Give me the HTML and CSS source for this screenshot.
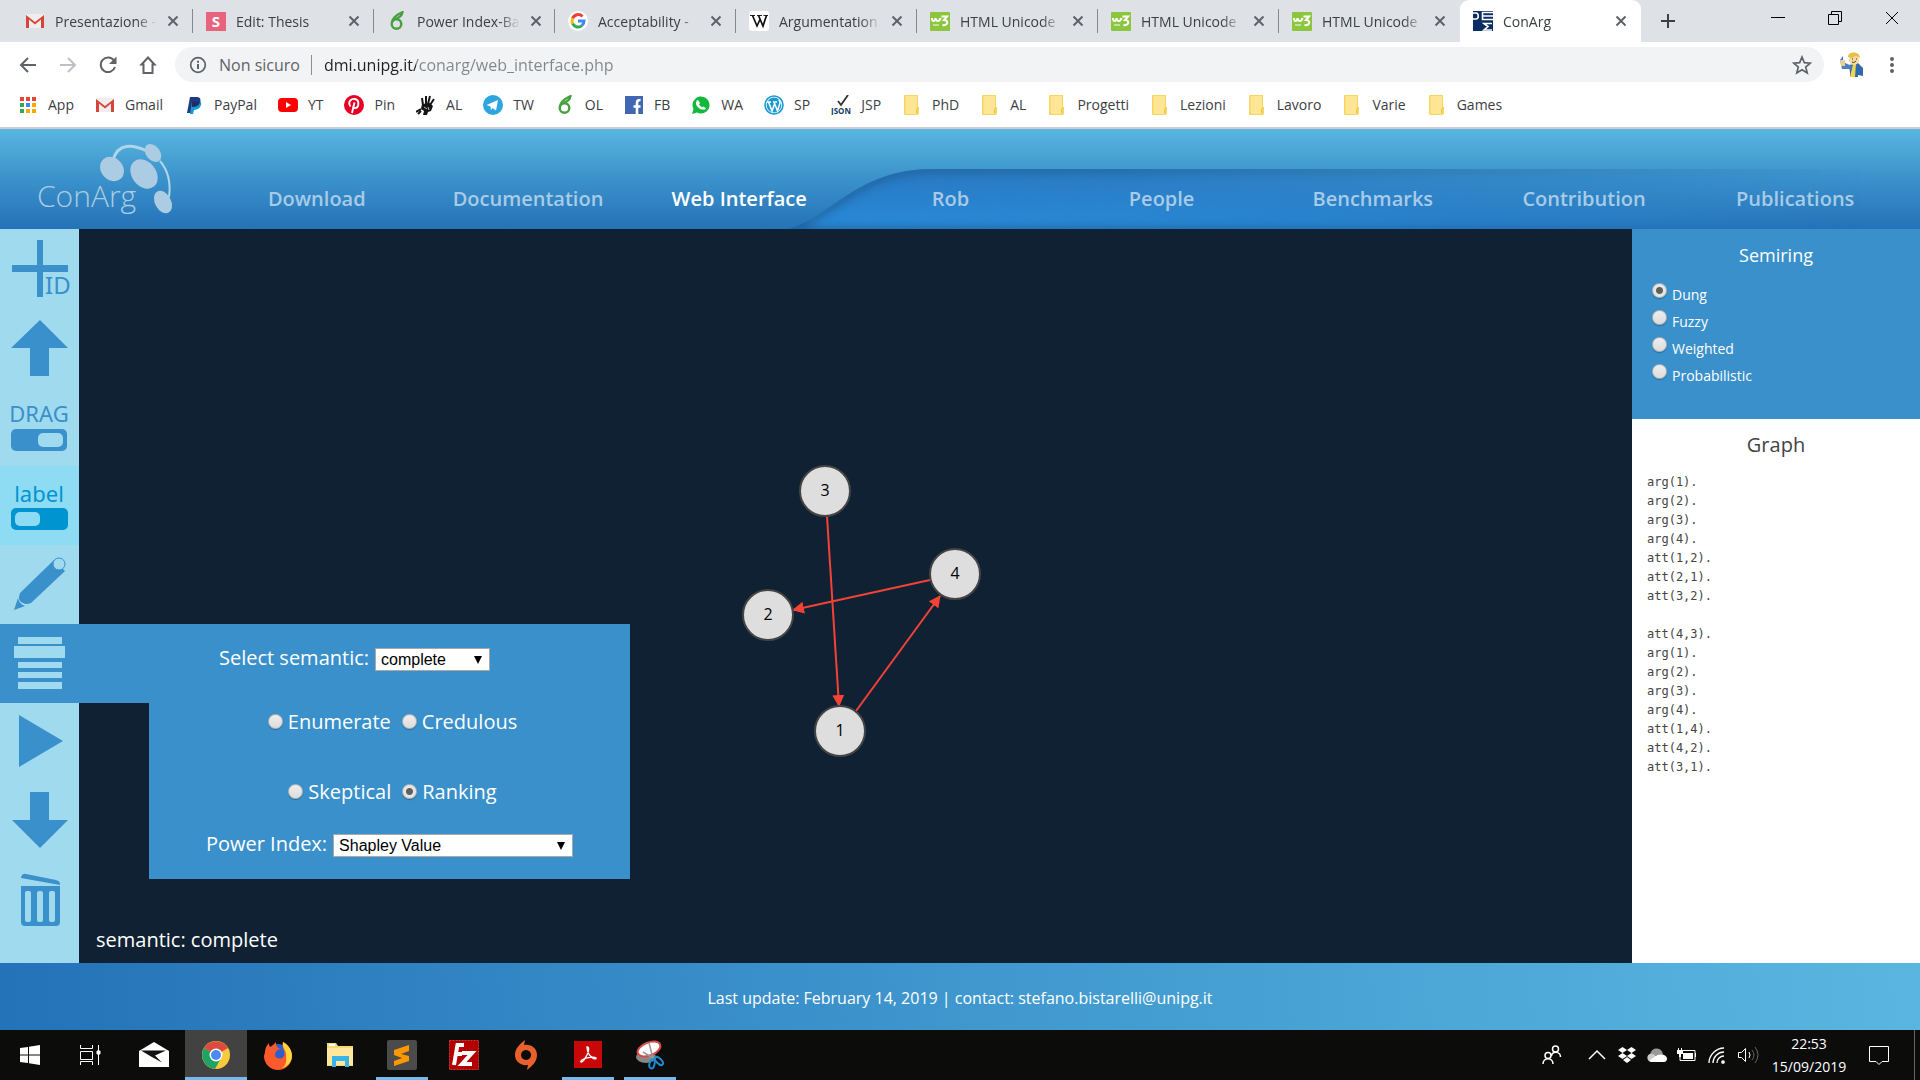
FILE: index.html
```html
<!DOCTYPE html>
<html lang="en">
<head>
  <meta charset="utf-8">
  <title>ConArg</title>
  <link rel="stylesheet" href="styles.css">
</head>
<body>

  <!-- shared icons -->
  <svg class="defs" width="0" height="0" aria-hidden="true">
    <symbol id="i-close" viewBox="0 0 12 12"><path d="M1.5 1.5l9 9M10.5 1.5l-9 9" stroke="#5f6368" stroke-width="2" fill="none"/></symbol>
    <symbol id="i-gmail" viewBox="0 0 20 20"><path d="M1 3h18v14H1z" fill="#f0eded"/><path d="M1 17V4l9 7 9-7v13h-3V8.500l-6 5-6-5V17z" fill="#d6453a"/></symbol>
    <symbol id="i-leaf" viewBox="0 0 20 20"><circle cx="9.500" cy="13" r="4.800" fill="none" stroke="#47a141" stroke-width="2.400"/><path d="M5 12C5 7 9 4 15.500 1c-.5 4-4 6-7 7" fill="none" stroke="#47a141" stroke-width="2.200"/></symbol>
    <symbol id="i-w3" viewBox="0 0 20 20"><rect y="1" width="20" height="19" rx="1" fill="#8cc63f"/><path d="M2 7c0 4 3 4 3.500 0 .5 4 4 4 5 0M11.500 5.500H17l-3 3.500c5 0 4 6-1.500 5" fill="none" stroke="#fff" stroke-width="2"/><path d="M3 14h6" stroke="#d5ecb4" stroke-width="1.500"/></symbol>
    <symbol id="i-folder" viewBox="0 0 20 20"><path d="M3 0h13v12h1v6a2 2 0 0 1-2 2H3a1 1 0 0 1-1-1V1a1 1 0 0 1 1-1z" fill="#f7d65f"/><path d="M3.500 1H15v12l-1 2v4H3.500z" fill="#ffe695"/><path d="M14.500 18v-4q1-2 2 0" stroke="#f0c64a" fill="none"/></symbol>
  </svg>

  <header class="browser">
    <div class="tab-strip">
      <div class="tab">
        <svg class="favicon"><use href="#i-gmail"/></svg>
        <span class="tab-title">Presentazione -</span>
        <button class="tab-close" aria-label="Close tab"><svg><use href="#i-close"/></svg></button>
      </div>
      <div class="tab">
        <svg class="favicon" viewBox="0 0 20 20"><path d="M0 1h20v19H0z" fill="#e9637d"/><text x="10" y="16" text-anchor="middle" class="favicon-s">S</text></svg>
        <span class="tab-title">Edit: Thesis</span>
        <button class="tab-close" aria-label="Close tab"><svg><use href="#i-close"/></svg></button>
      </div>
      <div class="tab">
        <svg class="favicon"><use href="#i-leaf"/></svg>
        <span class="tab-title">Power Index-Ba</span>
        <button class="tab-close" aria-label="Close tab"><svg><use href="#i-close"/></svg></button>
      </div>
      <div class="tab">
        <svg class="favicon" viewBox="0 0 20 20"><circle cx="10" cy="10" r="10" fill="#fff"/><g fill="none" stroke-width="3"><path d="M14.500 5.500A6 6 0 0 0 4.600 7.300" stroke="#ea4335"/><path d="M4.600 7.300a6 6 0 0 0 0 5.400" stroke="#fbbc05"/><path d="M4.600 12.700a6 6 0 0 0 9.400 1.800" stroke="#34a853"/><path d="M14 14.500a6 6 0 0 0 2-4.500h-6" stroke="#4285f4"/></g></svg>
        <span class="tab-title">Acceptability -</span>
        <button class="tab-close" aria-label="Close tab"><svg><use href="#i-close"/></svg></button>
      </div>
      <div class="tab">
        <svg class="favicon" viewBox="0 0 20 20"><rect width="20" height="20" rx="3" fill="#fff"/><path d="M1 4.500h5M8 4.500h5M14.500 4.500H19" stroke="#222"/><path d="M3.500 4.500L8 15l3-6.500M9.500 4.500L14 15l3.500-10.500" fill="none" stroke="#111" stroke-width="1.700"/></svg>
        <span class="tab-title">Argumentation</span>
        <button class="tab-close" aria-label="Close tab"><svg><use href="#i-close"/></svg></button>
      </div>
      <div class="tab">
        <svg class="favicon"><use href="#i-w3"/></svg>
        <span class="tab-title">HTML Unicode</span>
        <button class="tab-close" aria-label="Close tab"><svg><use href="#i-close"/></svg></button>
      </div>
      <div class="tab">
        <svg class="favicon"><use href="#i-w3"/></svg>
        <span class="tab-title">HTML Unicode</span>
        <button class="tab-close" aria-label="Close tab"><svg><use href="#i-close"/></svg></button>
      </div>
      <div class="tab tab-last">
        <svg class="favicon"><use href="#i-w3"/></svg>
        <span class="tab-title">HTML Unicode</span>
        <button class="tab-close" aria-label="Close tab"><svg><use href="#i-close"/></svg></button>
      </div>
      <div class="tab active">
        <svg class="favicon" viewBox="0 0 20 20"><path d="M0 0h20v20H0z" fill="#0b2d63"/><path d="M0 2h3c3 0 3 6 0 6H0M20 1.500H9.500v7H20M9.500 5H20M19 12.500h-8l4 3-4 3.500h8" fill="none" stroke="#fff" stroke-width="1.600"/></svg>
        <span class="tab-title">ConArg</span>
        <button class="tab-close" aria-label="Close tab"><svg><use href="#i-close"/></svg></button>
      </div>
      <button class="new-tab" aria-label="New tab"><svg width="16" height="16"><path d="M8 1v14M1 8h14" stroke="#3c4043" stroke-width="2"/></svg></button>
      <div class="window-buttons">
        <button aria-label="Minimize"><svg width="14" height="14"><path d="M0 6.500h14" stroke="#000"/></svg></button>
        <button aria-label="Restore"><svg width="14" height="14"><path d="M.5 3.500h10v10H.5zM3.500 3V.500h10v10H11" fill="none" stroke="#000"/></svg></button>
        <button aria-label="Close"><svg width="14" height="14"><path d="M1 1l12 12M13 1L1 13" stroke="#000"/></svg></button>
      </div>
    </div>

    <div class="toolbar">
      <button class="tool" aria-label="Back"><svg width="20" height="20"><path d="M18 10H3M10 3l-7 7 7 7" fill="none" stroke="#5f6368" stroke-width="2"/></svg></button>
      <button class="tool" aria-label="Forward"><svg width="20" height="20"><path d="M2 10h15M10 3l7 7-7 7" fill="none" stroke="#bdc1c6" stroke-width="2"/></svg></button>
      <button class="tool" aria-label="Reload"><svg width="20" height="20"><path d="M16 5.500A7.300 7.300 0 1 0 17 12" fill="none" stroke="#5f6368" stroke-width="2"/><path d="M18.500 1.500v7.500H11z" fill="#5f6368"/></svg></button>
      <button class="tool" aria-label="Home"><svg width="20" height="20"><path d="M10 2.500l6.500 7h-2V18h-9V9.500h-2z" fill="none" stroke="#5f6368" stroke-width="2"/></svg></button>
      <div class="omnibox">
        <svg width="18" height="18"><circle cx="9" cy="9" r="7.300" fill="none" stroke="#5f6368" stroke-width="1.700"/><path d="M9 8v5M9 4.800v2" stroke="#5f6368" stroke-width="2"/></svg>
        <span class="not-secure">Non sicuro</span>
        <input class="url" type="text" aria-label="Address" value="dmi.unipg.it/conarg/web_interface.php">
        <button class="star" aria-label="Bookmark"><svg width="20" height="20"><path d="M10 2l2.300 5.600 6 .5-4.600 3.900 1.500 5.900L10 14.700l-5.200 3.200L6.300 12 1.700 8.100l6-.5z" fill="none" stroke="#5f6368" stroke-width="1.700"/></svg></button>
      </div>
      <button class="tool avatar" aria-label="Profile"><svg width="26" height="26"><path d="M10 13l9-2 5 5v8l-5-1v2h-8v-4z" fill="#2f68ae"/><path d="M1 8l3-4v6l9 4-1 3H3z" fill="#4c80bb"/><path d="M1 8h5v6H2z" fill="#e7cf9d"/><path d="M14 12h3l-1 13h-5z" fill="#f1d44d"/><circle cx="15" cy="8" r="5" fill="#f2d9a0"/><path d="M9 5c0-6 12-6 12 1l-4-2-5 2z" fill="#e6bf45"/><path d="M13 10c2 1 3 0 4-1M13 7h1M17 7h1" stroke="#4a3a1d" fill="none"/></svg></button>
      <button class="tool" aria-label="Menu"><svg width="20" height="20" fill="#5f6368"><circle cx="10" cy="4" r="2"/><circle cx="10" cy="10" r="2"/><circle cx="10" cy="16" r="2"/></svg></button>
    </div>

    <nav class="bookmarks">
      <a href="#"><svg viewBox="0 0 20 20"><path d="M2 2h4v4H2zM8 2h4v4H8zM14 2h4v4h-4z" fill="#ea4335"/><path d="M2 8h4v4H2z" fill="#34a853"/><path d="M8 8h4v4H8z" fill="#4285f4"/><path d="M14 8h4v4h-4zM8 14h4v4H8zM14 14h4v4h-4z" fill="#fbaa05"/><path d="M2 14h4v4H2z" fill="#34a853"/></svg>App</a>
      <a href="#"><svg><use href="#i-gmail"/></svg>Gmail</a>
      <a href="#"><svg viewBox="0 0 20 20"><path d="M6 2h7c4 0 4 4 3 6s-3 4-8 4l-1 6H3z" fill="#1f3b80"/><path d="M8 7h9c1 4-2 8-7 8l-1 4H6z" fill="#179bd7"/><path d="M8 7h8c-1 4-4 5-8 5z" fill="#222d65"/></svg>PayPal</a>
      <a href="#"><svg viewBox="0 0 20 20"><rect y="3" width="20" height="14" rx="4" fill="#f00"/><path d="M8 7l5 3-5 3z" fill="#fff"/></svg>YT</a>
      <a href="#"><svg viewBox="0 0 20 20"><circle cx="10" cy="10" r="10" fill="#e60023"/><path d="M6.500 11.500C3 6 8 3.500 11 4c5 1 4 9 0 9-1 0-2-.5-2-1.500M10.500 7.500L8 18" fill="none" stroke="#fff" stroke-width="1.900"/></svg>Pin</a>
      <a href="#"><svg viewBox="0 0 20 20"><path d="M6 9l8-1 3 3-2 5-3 1-1 3H7l1-4-3-2z" fill="#151515"/><path d="M7 10L6 3M10 9V1M12 9l2-8M14 10l4-6M5 14l-5 3M5 16l-3 3" stroke="#151515" stroke-width="2"/><path d="M8 12l3 2M12 12l1 3" stroke="#bbb"/></svg>AL</a>
      <a href="#"><svg viewBox="0 0 20 20"><circle cx="10" cy="10" r="10" fill="#2ca5e0"/><path d="M3.500 10L15 5l-2 10.500-3.500-2.500-1.500 2-.5-3.500z" fill="#fff"/></svg>TW</a>
      <a href="#"><svg><use href="#i-leaf"/></svg>OL</a>
      <a href="#"><svg viewBox="0 0 20 20"><path d="M1 1h18v18H1z" fill="#4267b2"/><path d="M13 19V7.500c0-2 1-2.500 3.500-2.500M9.500 11.500h7" fill="none" stroke="#fff" stroke-width="2.600"/></svg>FB</a>
      <a href="#"><svg viewBox="0 0 20 20"><path d="M1 19l1.500-5A8.500 8.500 0 1 1 6 17.500z" fill="#12b93c"/><path d="M7 5l2 3-1 1.500 3 3 1.500-1 2.500 2c-2 3-10 0-10-5.500 0-2 1-3 2-3z" fill="#fff"/></svg>WA</a>
      <a href="#"><svg viewBox="0 0 20 20"><circle cx="10" cy="10" r="9" fill="#fff" stroke="#1b9ad1" stroke-width="1.600"/><circle cx="10" cy="10" r="7.400" fill="#1b9ad1"/><path d="M3 7h4M9 7h4M4.500 7l3.500 9 2.500-7M10 7l3.500 9L16 8c0-2-1-2-1-3.500" fill="none" stroke="#fff" stroke-width="1.500"/></svg>SP</a>
      <a href="#"><svg viewBox="0 0 20 20"><path d="M7 6l3 4 7-10" fill="none" stroke="#333" stroke-width="1.800"/><text x="10" y="19" text-anchor="middle" class="favicon-json">JSON</text></svg>JSP</a>
      <a href="#"><svg><use href="#i-folder"/></svg>PhD</a>
      <a href="#"><svg><use href="#i-folder"/></svg>AL</a>
      <a href="#"><svg><use href="#i-folder"/></svg>Progetti</a>
      <a href="#"><svg><use href="#i-folder"/></svg>Lezioni</a>
      <a href="#"><svg><use href="#i-folder"/></svg>Lavoro</a>
      <a href="#"><svg><use href="#i-folder"/></svg>Varie</a>
      <a href="#"><svg><use href="#i-folder"/></svg>Games</a>
    </nav>
  </header>

  <div class="site-header">
    <svg class="swoosh" viewBox="0 0 1131 60" preserveAspectRatio="none" aria-hidden="true">
      <defs>
        <linearGradient id="fill" x1="0" y1="0" x2="0" y2="1"><stop offset="0" stop-color="#2877bf"/><stop offset="1" stop-color="#2a8bdb"/></linearGradient>
        <linearGradient id="fade"><stop offset="0" stop-color="#fff"/><stop offset=".3" stop-color="#ddd"/><stop offset=".95" stop-color="#000"/></linearGradient>
        <mask id="fade-mask"><path d="M0-5h1131v70H0z" fill="url(#fade)"/></mask>
        <clipPath id="shape"><path d="M0 60C45 48 70 0 145 0H1131V60z"/></clipPath>
        <filter id="soft" x="-5%" y="-50%" width="110%" height="200%"><feGaussianBlur stdDeviation="5"/></filter>
      </defs>
      <g mask="url(#fade-mask)"><g clip-path="url(#shape)">
        <path d="M0 0h1131v60H0z" fill="url(#fill)"/>
        <path d="M-10 62L0 60C45 48 70 0 145 0H1160V62z" fill="none" stroke="#1f5f98" stroke-width="7" filter="url(#soft)"/>
      </g></g>
    </svg>
    <a class="logo" href="#" aria-label="ConArg home">
      <svg width="180" height="100" viewBox="0 0 180 100">
        <g fill="none" stroke="#aed5e8"><path d="M113 31C118 14 132 15 147 22" stroke-width="3"/><path d="M160 32Q172 46 169 68" stroke-width="2"/></g>
        <g fill="#abcce3"><ellipse cx="112" cy="40" rx="11" ry="13" transform="rotate(-42 112 40)"/><ellipse cx="144" cy="45" rx="12" ry="16" transform="rotate(-38 144 45)"/><ellipse cx="153" cy="24" rx="7" ry="10" transform="rotate(-38 153 24)"/><ellipse cx="163" cy="73" rx="8" ry="12" transform="rotate(-28 163 73)"/></g>
        <text x="37" y="78" class="logo-text">ConArg</text>
      </svg>
    </a>
    <nav class="site-nav">
      <a href="#">Download</a>
      <a href="#">Documentation</a>
      <a href="#" class="current">Web Interface</a>
      <a href="#">Rob</a>
      <a href="#">People</a>
      <a href="#">Benchmarks</a>
      <a href="#">Contribution</a>
      <a href="#">Publications</a>
    </nav>
  </div>

  <main class="workspace">
    <div class="tools">
      <button class="tool-button" aria-label="Add with ID">
        <svg viewBox="0 0 79 79"><path d="M37 11h6v57h-6zM12 36h56v7H12z"/><text x="45" y="65" font-size="24">ID</text></svg>
      </button>
      <button class="tool-button" aria-label="Upload">
        <svg viewBox="0 0 79 79"><path d="M40 12l28 28H49v28H30V40H11z"/></svg>
      </button>
      <button class="tool-button" aria-label="Drag">
        <svg viewBox="0 0 79 79"><text x="39" y="35" font-size="22" text-anchor="middle">DRAG</text><rect x="11" y="42" width="56" height="22" rx="5"/><rect x="38" y="46" width="25" height="14" rx="5" class="knob"/></svg>
      </button>
      <button class="tool-button on" aria-label="Label">
        <svg viewBox="0 0 79 79"><text x="39" y="36" font-size="22" text-anchor="middle">label</text><rect x="11" y="42" width="57" height="22" rx="5"/><rect x="15" y="46" width="25" height="14" rx="5" class="knob"/></svg>
      </button>
      <button class="tool-button" aria-label="Edit">
        <svg viewBox="0 0 79 79"><path d="M54 15l-34 33q-3 8 3 10 3 2 8 0l34-32z"/><path d="M18 53l-4 12 11-4q-6-2-7-8z"/><circle cx="59" cy="19" r="6" class="knob" stroke="#3990ca"/></svg>
      </button>
      <div class="menu-slot">
        <button class="tool-button open" aria-label="Semantic">
          <svg viewBox="0 0 79 79"><path d="M18 13h44v7H18zM14 22h51v12H14zM18 38h44v6H18zM18 48h44v6H18zM18 58h44v7H18z"/></svg>
        </button>
        <form class="menu">
          <div class="menu-head">
            <label for="semantic">Select semantic:</label>
            <select id="semantic" class="select-small"><option>complete</option><option>stable</option><option>grounded</option></select>
          </div>
          <div class="menu-body">
            <div class="radio-row">
              <label><input type="radio" name="task">Enumerate</label>
              <label><input type="radio" name="task">Credulous</label>
            </div>
            <div class="radio-row">
              <label><input type="radio" name="task">Skeptical</label>
              <label><input type="radio" name="task" checked>Ranking</label>
            </div>
            <div class="power-row">
              <label for="power">Power Index:</label>
              <select id="power" class="select-wide"><option>Shapley Value</option><option>Banzhaf Index</option></select>
            </div>
          </div>
        </form>
      </div>
      <button class="tool-button" aria-label="Run">
        <svg viewBox="0 0 79 79"><path d="M19 12l44 26-44 26z"/></svg>
      </button>
      <button class="tool-button" aria-label="Download">
        <svg viewBox="0 0 79 79"><path d="M30 10h19v28h19L40 66 12 38h18z"/></svg>
      </button>
      <button class="tool-button" aria-label="Delete">
        <svg viewBox="0 0 79 79"><path d="M21 17q1-5 5-4l30 6q4 1 4 4v1z"/><path d="M21 25h39v36q0 4-4 4H25q-4 0-4-4z"/><g class="knob"><rect x="25" y="30" width="6" height="31" rx="2"/><rect x="37" y="30" width="6" height="31" rx="2"/><rect x="49" y="30" width="6" height="31" rx="2"/></g></svg>
      </button>
    </div>

    <div class="canvas">
      <svg class="graph" role="img" aria-label="Argumentation graph">
        <defs>
          <marker id="arrow" viewBox="0 0 12 12" refX="11" refY="6" markerWidth="12" markerHeight="12" markerUnits="userSpaceOnUse" orient="auto"><path d="M0 0l12 6-12 6z" fill="#f44336"/></marker>
        </defs>
        <g class="edges" marker-end="url(#arrow)">
          <path d="M748 287L760 477"/>
          <path d="M851 351L714 381"/>
          <path d="M777 482L861 367"/>
        </g>
        <g class="node"><circle cx="746" cy="262" r="25"/><text x="746" y="267">3</text></g>
        <g class="node"><circle cx="876" cy="345" r="25"/><text x="876" y="350">4</text></g>
        <g class="node"><circle cx="689" cy="386" r="25"/><text x="689" y="391">2</text></g>
        <g class="node"><circle cx="761" cy="502" r="25"/><text x="761" y="507">1</text></g>
      </svg>
      <p class="status">semantic: complete</p>
    </div>

    <aside class="side">
      <section class="semiring">
        <h2>Semiring</h2>
        <label><input type="radio" name="semiring" checked>Dung</label>
        <label><input type="radio" name="semiring">Fuzzy</label>
        <label><input type="radio" name="semiring">Weighted</label>
        <label><input type="radio" name="semiring">Probabilistic</label>
      </section>
      <section class="graph-text">
        <h2>Graph</h2>
<pre>arg(1).
arg(2).
arg(3).
arg(4).
att(1,2).
att(2,1).
att(3,2).

att(4,3).
arg(1).
arg(2).
arg(3).
arg(4).
att(1,4).
att(4,2).
att(3,1).</pre>
      </section>
    </aside>
  </main>

  <footer class="site-footer">Last update: February 14, 2019 | contact: stefano.bistarelli@unipg.it</footer>

  <div class="taskbar">
    <button class="task-start" aria-label="Start"><svg width="20" height="20" fill="#fff"><path d="M0 3l8-1v7.500H0zM9 1.800L20 0v9.500H9zM0 10.500h8V18l-8-1zM9 10.500h11V20L9 18.200z"/></svg></button>
    <button class="task-start" aria-label="Task view"><svg width="22" height="20" fill="none" stroke="#fff"><path d="M1.500 0v3.500h12V0M1.500 6.500h12v8h-12zM1.500 20v-3.500h12V20M19.500 0v20"/><path d="M18 6h3v3h-3z" fill="#fff"/></svg></button>
    <div class="task-apps">
      <button aria-label="Mail"><svg viewBox="0 0 30 30"><path d="M0 11L15 2l15 9v16H0z" fill="#fff"/><path d="M2 10.500h25l-11 5 7 7-11-6z" fill="#111"/></svg></button>
      <button class="running focused" aria-label="Chrome"><svg viewBox="0 0 30 30"><circle cx="15" cy="15" r="14" fill="#fbc93d"/><path d="M15 15L3 8a14 14 0 0 1 24 0z" fill="#dd4b3e"/><path d="M3 8a14 14 0 0 0 11 21l6-11-5-3z" fill="#1fa463"/><circle cx="15" cy="15" r="6.500" fill="#fff"/><circle cx="15" cy="15" r="5" fill="#4a8af4"/></svg></button>
      <button aria-label="Firefox"><svg viewBox="0 0 30 30"><circle cx="15" cy="16" r="12" fill="#2b5fd0"/><path d="M2 12c0-4 2-7 4-9 0 3 1 4 2 4l5-5c0 4 1 6 5 7-4 0-6 3-6 6 0 4 7 5 9 1 2-5-3-8-1-14 6 3 9 9 9 14a14 14 0 0 1-28 0z" fill="#ff5a2b"/><path d="M20 2c6 3 9 9 9 14 0 6-5 11-10 12 6-4 4-10 4-14s-4-6-3-12z" fill="#ffd53a"/></svg></button>
      <button aria-label="File Explorer"><svg viewBox="0 0 30 30"><path d="M2 3h9l2 3h15v20H2z" fill="#f8d775"/><path d="M2 8h26v17H2z" fill="#ffe79c"/><path d="M7 16h17v11h-4v-6h-9v6H7z" fill="#38b4e8"/><path d="M4 4h6v2H4z" fill="#fff"/></svg></button>
      <button class="running" aria-label="Sublime Text"><svg viewBox="0 0 30 30"><rect width="30" height="30" rx="2" fill="#4b4b4b"/><path d="M7 10l15-5v6l-8 3 8 2v5L7 26v-5l8-3-8-3z" fill="#ff9800"/></svg></button>
      <button aria-label="FileZilla"><svg viewBox="0 0 30 30"><rect x=".5" y=".5" width="29" height="29" fill="#b40000" stroke="#d33" stroke-dasharray="2 1"/><path d="M15 5H8.500L5 25M7 14h6M13 13h10l-10 11h10" fill="none" stroke="#fff" stroke-width="4"/></svg></button>
      <button aria-label="Origin"><svg viewBox="0 0 30 30"><path d="M14 0l-1 5c8-1 13 4 13 10 0 7-5 11-10 15l1-5C9 26 4 21 4 15 4 8 9 4 14 0zM15 10a5 5 0 1 0 .1 0z" fill="#e8612c" fill-rule="evenodd"/></svg></button>
      <button class="running" aria-label="Acrobat"><svg viewBox="0 0 30 30"><path d="M1 1h28v27H1z" fill="#c80808"/><path d="M14 7c3 0 2 6-3 13-2 3-4 2-3 1 2-3 13-5 15-3 1 3-9-1-9-11z" fill="none" stroke="#fff" stroke-width="1.300"/></svg></button>
      <button class="running" aria-label="Snipping Tool"><svg viewBox="0 0 30 30"><ellipse cx="11" cy="17" rx="10" ry="6" fill="#888"/><ellipse cx="14" cy="9" rx="12" ry="6.500" fill="#fff" stroke="#d84a4a" stroke-width="2" transform="rotate(-22 14 9)"/><path d="M14 3l4 15M8 12l10 6" stroke="#999" stroke-width="1.500"/><g fill="none" stroke="#1c8bd0" stroke-width="2"><ellipse cx="17" cy="24" rx="2.500" ry="4.500" transform="rotate(15 17 24)"/><ellipse cx="24" cy="21" rx="2.500" ry="5" transform="rotate(-45 24 21)"/></g></svg></button>
    </div>
    <div class="tray">
      <svg class="people" width="20" height="20" fill="none" stroke="#fff" stroke-width="1.500"><circle cx="13.500" cy="4" r="3"/><circle cx="6" cy="10.500" r="3"/><path d="M9.500 11c0-5 9-5 9 1M1 19c0-7 10-7 10 0"/></svg>
      <svg width="20" height="20"><path d="M2 14l8-8 8 8" fill="none" stroke="#fff" stroke-width="1.500"/></svg>
      <svg width="20" height="20" fill="#fff"><path d="M5.500 2L10 5 5.500 8 1 5zM14.500 2L19 5l-4.500 3L10 5zM5.500 8L10 11l-4.500 3L1 11zM14.500 8L19 11l-4.500 3L10 11zM10 12l4 3-4 3-4-3z"/></svg>
      <svg width="20" height="20"><path d="M3 11c0-9 11-10 13-2z" fill="#999"/><path d="M1 15c-2-4 1-7 5-6l13 7c-1 1-17 2-18-1z" fill="#ccc"/><path d="M2 16l8-6c4-2 10 0 10 4 0 2-2 3-3 3H4z" fill="#fff"/></svg>
      <svg width="20" height="20"><path d="M6 5.500h12v10H3v-4M18.500 8v4" fill="none" stroke="#fff"/><path d="M6 8h10v6H6zM0 5h6v4H4v3H2V9H0zM1 3h1v2H1zM4 3h1v2H4z" fill="#fff"/></svg>
      <svg width="20" height="20" fill="none" stroke="#fff" stroke-width="1.300"><path d="M2 18C2 10 9 3 17 3"/><path d="M6 18c0-6 5-11 11-11" /><path d="M10 18c0-4 3-7 7-7"/><circle cx="16" cy="17" r="1.200" fill="#fff"/></svg>
      <svg width="22" height="20" fill="none" stroke="#fff"><path d="M1.500 7.500h3l4-4v13l-4-4h-3z"/><path d="M12 7q2 3 0 6"/><path d="M15 5q4 5 0 10M18 2q6 8 0 16" stroke="#666"/></svg>
      <div class="clock"><span>22:53</span><span>15/09/2019</span></div>
      <svg class="notify" width="20" height="20"><path d="M.5 1.500h19v15H13l-3 3-3-3H.5z" fill="none" stroke="#fff"/></svg>
    </div>
  </div>

</body>
</html>
```
FILE: styles.css
```css
* {
  box-sizing: border-box;
}
body {
  margin: 0;
  min-height: 100vh;
  display: flex;
  flex-direction: column;
  font-family: 'Open Sans', 'Noto Sans', sans-serif;
  font-size: 20px;
  color: #fff;
  background: #0f2132;
}
button {
  border: 0;
  padding: 0;
  background: none;
  display: flex;
  align-items: center;
  justify-content: center;
  cursor: pointer;
}
a {
  text-decoration: none;
}
.defs {
  position: absolute;
}

/* browser window */
.browser {
  background: #fff;
  border-bottom: 2px solid #cfcdcf;
  color: #3c4043;
  font-size: 14px;
}
.tab-strip {
  display: flex;
  height: 42px;
  padding-left: 12px;
  background: #dee1e6;
}
.tab {
  flex: 0 1 181px;
  min-width: 0;
  display: flex;
  align-items: center;
  gap: 10px;
  padding: 0 14px 0 13px;
  background: linear-gradient(#85888c, #85888c) right center / 1px 24px no-repeat;
}
.tab-last {
  background: none;
}
.tab.active {
  background: #fff;
  border-radius: 9px 9px 0 0;
}
.favicon {
  flex: none;
  width: 20px;
  height: 20px;
}
.favicon-s {
  font: bold 15px 'Open Sans', sans-serif;
  fill: #fff;
}
.favicon-json {
  font: bold 8px 'Open Sans', sans-serif;
  fill: #123a5c;
}
.tab-title {
  flex: 1;
  white-space: nowrap;
  -webkit-mask-image: linear-gradient(to right, #000 80%, transparent);
  mask-image: linear-gradient(to right, #000 80%, transparent);
}
.tab-close svg {
  width: 12px;
  height: 12px;
}
.new-tab {
  width: 54px;
}
.window-buttons {
  display: flex;
  margin-left: auto;
}
.window-buttons button {
  width: 57px;
  height: 36px;
}
.toolbar {
  display: flex;
  align-items: center;
  height: 45px;
  padding: 0 8px;
}
.tool {
  width: 40px;
  height: 35px;
}
.omnibox {
  flex: 1;
  display: flex;
  align-items: center;
  height: 35px;
  margin: 0 8px 0 7px;
  padding: 0 12px 0 14px;
  border-radius: 18px;
  background: #f1f3f4;
  font-size: 16px;
}
.not-secure {
  margin: 0 12px;
  padding-right: 11px;
  line-height: 20px;
  color: #5f6368;
  border-right: 1px solid #8b8e92;
}
.url {
  flex: 1;
  border: 0;
  padding: 0;
  outline: 0;
  font: inherit;
  color: transparent;
  background: linear-gradient(to right, #202124 92px, #80868b 92px);
  -webkit-background-clip: text;
  background-clip: text;
}
.bookmarks {
  display: flex;
  align-items: center;
  gap: 21px;
  height: 40px;
  padding: 0 18px 5px;
  white-space: nowrap;
}
.bookmarks a {
  display: flex;
  align-items: center;
  gap: 10px;
  color: #3c4043;
}
.bookmarks svg {
  width: 20px;
  height: 20px;
}

/* site header */
.site-header {
  position: relative;
  display: flex;
  height: 100px;
  background: linear-gradient(#5ab6e0, #3f97ce 42%, #2472b8);
}
.swoosh {
  position: absolute;
  right: 0;
  bottom: 0;
  width: 59%;
  height: 60px;
}
.logo {
  width: 11%;
}
.logo-text {
  font-size: 30px;
  font-weight: 300;
  fill: #abcce3;
}
.site-nav {
  position: relative;
  width: 88%;
  display: flex;
  padding-top: 56px;
}
.site-nav a {
  flex: 1;
  text-align: center;
  font-size: 20px;
  line-height: 28px;
  font-weight: 600;
  color: #a8cbe8;
}
.site-nav .current {
  color: #fff;
}

/* workspace */
.workspace {
  flex: 1;
  display: flex;
}
.tools {
  flex: none;
  width: 79px;
  background: #a0daee;
}
.tool-button {
  width: 79px;
  height: 79px;
  font-family: 'Noto Sans', sans-serif;
  fill: #3990ca;
}
.tool-button svg {
  width: 79px;
  height: 79px;
}
.tool-button .knob {
  fill: #a0daee;
}
.tool-button.on {
  background: #8edcf3;
  fill: #0095d1;
}
.tool-button.on .knob {
  fill: #8edcf3;
}
.tool-button.open {
  background: #3990ca;
  fill: #a0daee;
}
.menu-slot {
  position: relative;
}
.menu {
  position: absolute;
  top: 0;
  left: 100%;
  width: 551px;
}
.menu-head {
  display: flex;
  justify-content: center;
  gap: 6px;
  height: 79px;
  padding-top: 20px;
  line-height: 28px;
  background: #3990ca;
}
.menu-body {
  margin-left: 70px;
  height: 176px;
  padding-top: 5px;
  line-height: 28px;
  background: #3990ca;
}
.menu select {
  height: 23px;
  margin-top: 4px;
  padding: 0 5px;
  border: 1px solid #a9a9a9;
  appearance: none;
  font: 16px 'Liberation Sans', sans-serif;
  color: #000;
  background: #fff url("data:image/svg+xml,%3Csvg xmlns='http://www.w3.org/2000/svg' width='8' height='8'%3E%3Cpath d='M0 0h8L4 8z'/%3E%3C/svg%3E") right 7px center no-repeat;
}
.menu .select-small {
  width: 115px;
}
.menu .select-wide {
  width: 240px;
}
.radio-row {
  display: flex;
  justify-content: center;
  gap: 11px;
  height: 70px;
  padding-left: 6px;
}
.radio-row label {
  display: flex;
  gap: 5px;
  height: 28px;
}
.radio-row input[type="radio"] {
  margin-top: 6px;
}
.power-row {
  display: flex;
  justify-content: center;
  gap: 6px;
  margin-top: -18px;
}
input[type="radio"] {
  appearance: none;
  flex: none;
  width: 15px;
  height: 15px;
  margin: 0;
  border: 1px solid #b4b4b4;
  border-radius: 50%;
  background: linear-gradient(#eee, #dcdcdc);
  box-shadow: 0 1px 1px rgba(0,0,0,0.25);
}
input[type="radio"]:checked {
  background: radial-gradient(circle, #606060 3px, #e6e6e6 4px);
}
.canvas {
  flex: 1;
  min-width: 0;
  display: flex;
  flex-direction: column;
  background: #0f2132;
}
.graph {
  flex: 1;
  width: 100%;
  min-height: 560px;
}
.edges {
  stroke: #f44336;
  stroke-width: 2;
}
.node circle {
  fill: #dedede;
  stroke: #444;
  stroke-width: 2;
}
.node text {
  font-size: 16px;
  text-anchor: middle;
  fill: #000;
}
.status {
  margin: 0;
  padding: 0 17px 9px;
  line-height: 28px;
}
.side {
  width: 15%;
  display: flex;
  flex-direction: column;
}
.side h2 {
  margin: 0;
  font-size: 18px;
  line-height: 26px;
  font-weight: 400;
  text-align: center;
}
.semiring {
  height: 190px;
  padding: 13px 20px;
  background: #3990ca;
}
.semiring h2 {
  margin-bottom: 15px;
}
.semiring label {
  display: flex;
  gap: 5px;
  height: 27px;
  font-size: 14px;
  line-height: 24px;
}
.graph-text {
  flex: 1;
  padding: 13px 15px;
  color: #444;
  background: #fff;
}
.graph-text pre {
  margin: 15px 0 0;
  font: 12px/19px 'DejaVu Sans Mono', monospace;
}
.graph-text h2 {
  font-size: 20px;
}
.site-footer {
  height: 67px;
  line-height: 70px;
  text-align: center;
  font-size: 16px;
  background: linear-gradient(85deg, #2472b8, #3f97ce 50%, #5ab6e0);
}

/* windows taskbar */
.taskbar {
  display: flex;
  height: 50px;
  background: #0c0c0b;
}
.task-start {
  width: 60px;
}
.task-apps {
  display: flex;
  margin-left: 3px;
}
.task-apps button {
  position: relative;
  width: 62px;
}
.task-apps svg {
  width: 30px;
  height: 30px;
}
.task-apps .running::after {
  content: "";
  position: absolute;
  left: 5px;
  right: 5px;
  bottom: 0;
  height: 3px;
  background: #76b9ed;
}
.task-apps .focused {
  background: #424242;
}
.task-apps .focused::after {
  left: 0;
  right: 0;
}
.tray {
  display: flex;
  align-items: center;
  gap: 10px;
  margin-left: auto;
  margin-right: 5px;
  padding-right: 25px;
  border-right: 1px solid #666;
}
.people {
  margin-right: 15px;
}
.clock {
  display: flex;
  flex-direction: column;
  width: 80px;
  font-size: 14px;
  line-height: 23px;
  text-align: center;
}
.notify {
  margin-left: 10px;
}
```
